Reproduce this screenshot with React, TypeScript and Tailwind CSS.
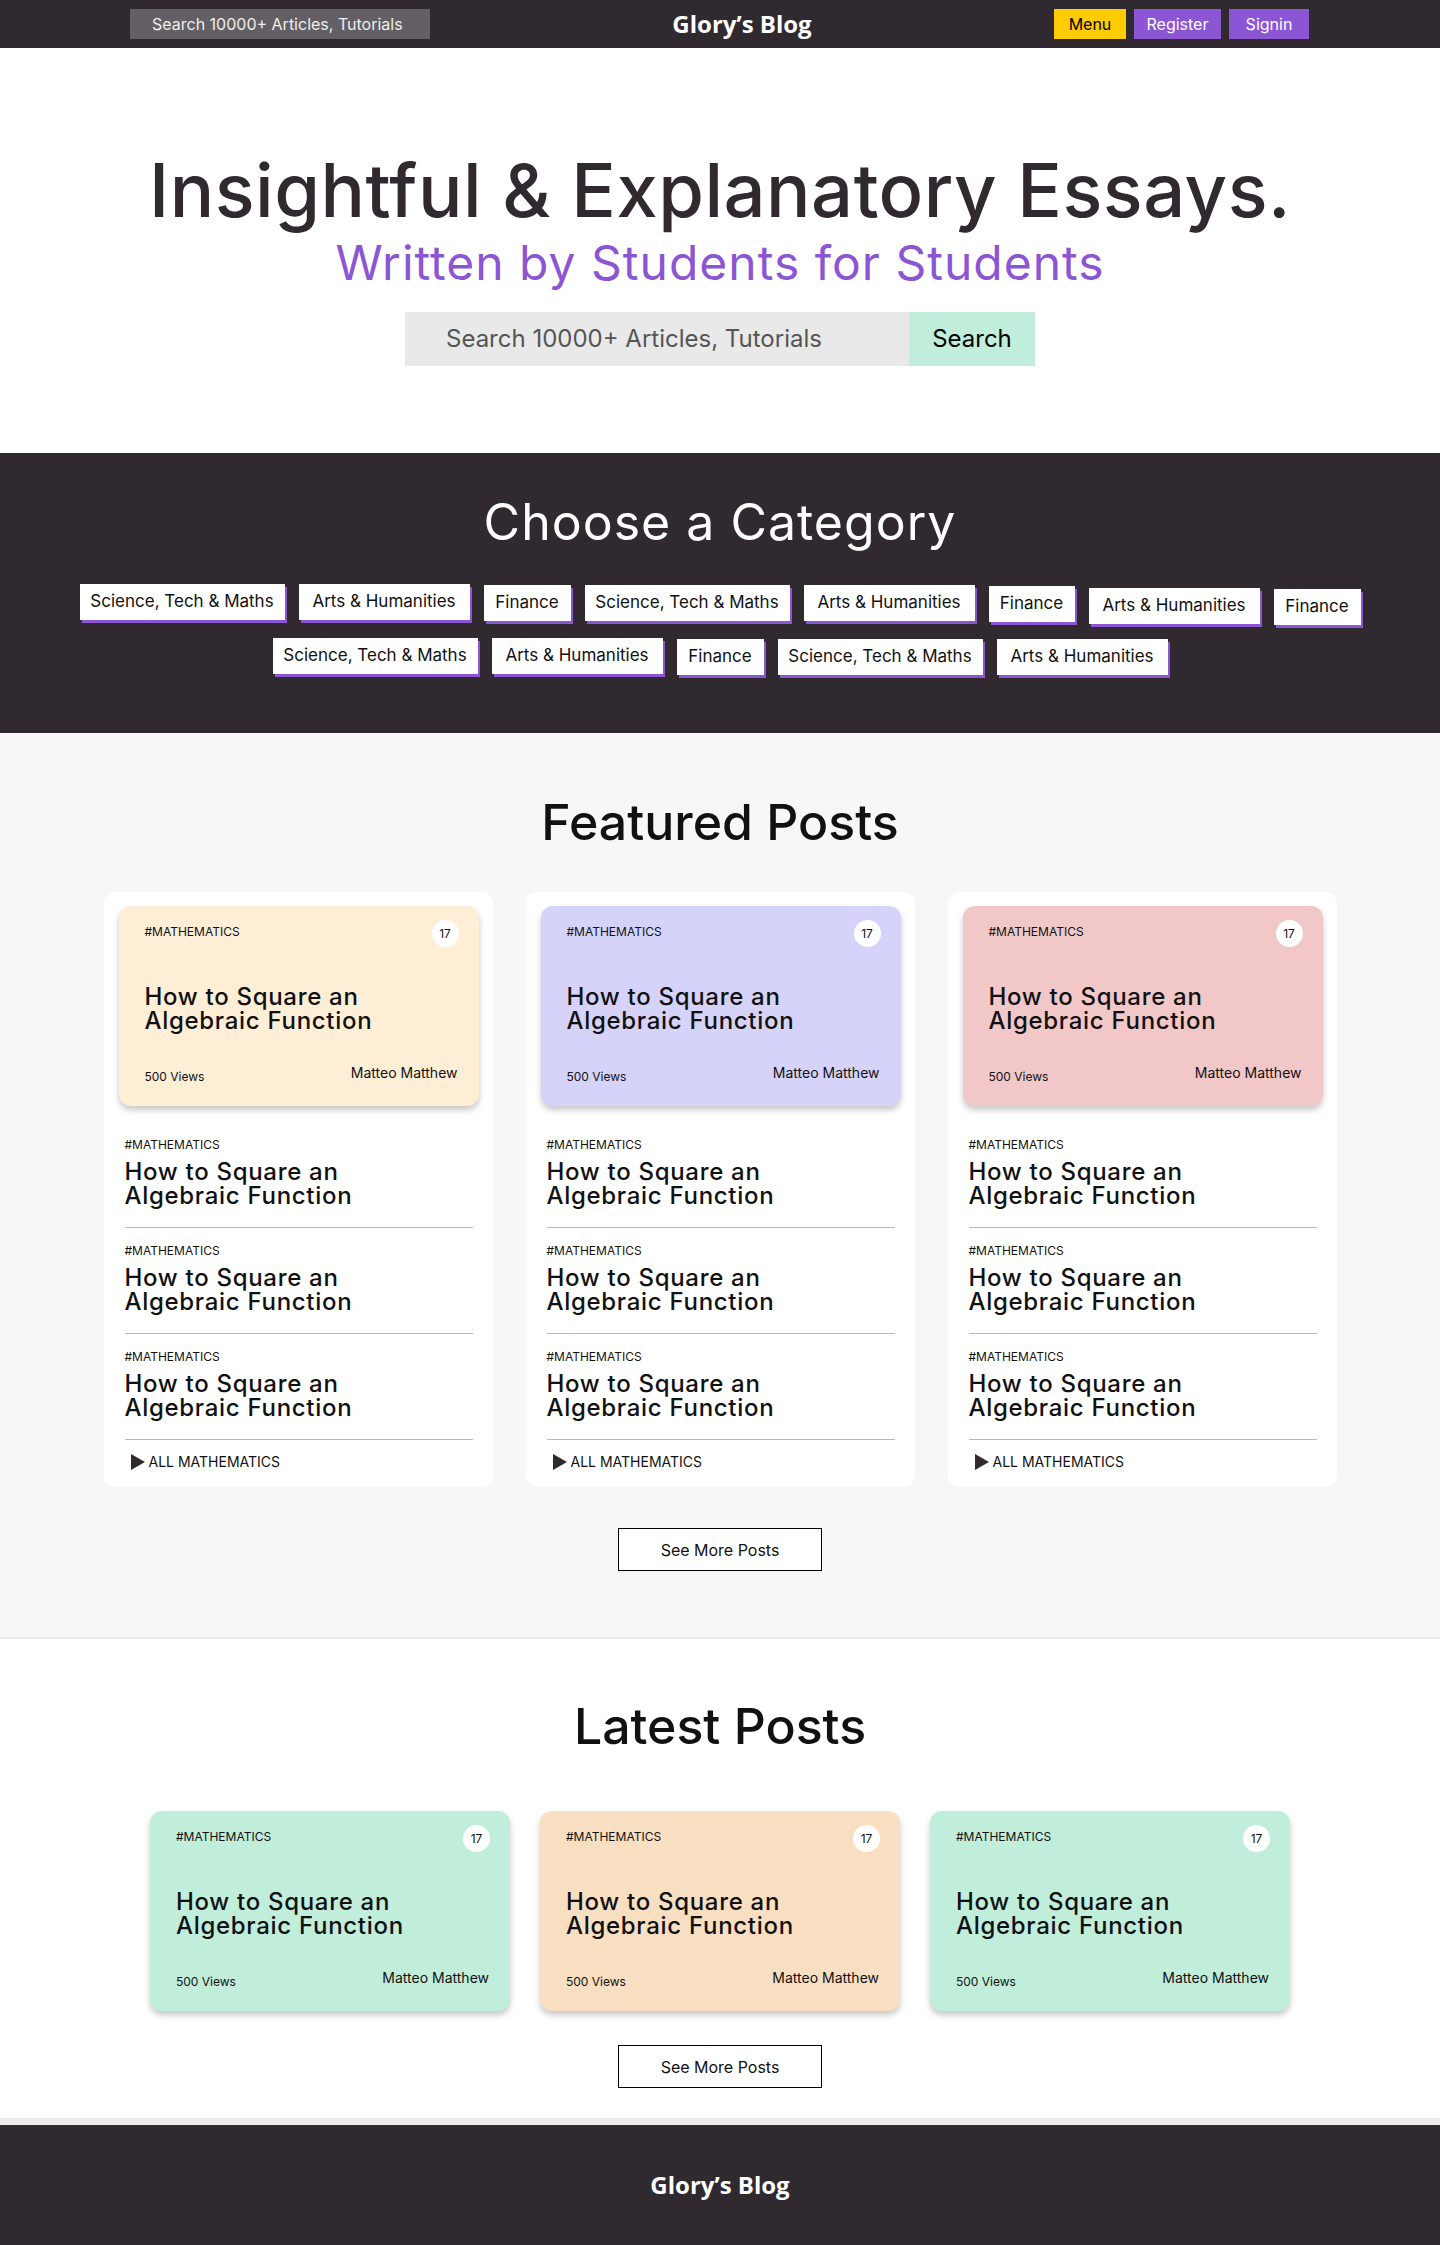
import React from "react";

const tagsRow1: [string, string][] = [
  ["Science, Tech & Maths", "w-[205px] mt-0"],
  ["Arts & Humanities", "w-[171px] mt-0"],
  ["Finance", "w-[87px] mt-px"],
  ["Science, Tech & Maths", "w-[205px] mt-px"],
  ["Arts & Humanities", "w-[171px] mt-px"],
  ["Finance", "w-[86px] mt-[2px]"],
  ["Arts & Humanities", "w-[171px] mt-[4px]"],
  ["Finance", "w-[87px] mt-[5px]"],
];
const tagsRow2: [string, string][] = [
  ["Science, Tech & Maths", "w-[205px] mt-0"],
  ["Arts & Humanities", "w-[171px] mt-0"],
  ["Finance", "w-[87px] mt-px"],
  ["Science, Tech & Maths", "w-[205px] mt-px"],
  ["Arts & Humanities", "w-[171px] mt-px"],
];

function Tag({ label, cls }: { label: string; cls: string }) {
  return (
    <div
      className={`${cls} h-[36px] bg-white text-[#111] text-[17px] flex items-center justify-center shadow-[2px_3px_0_#8b55d4]`}
    >
      {label}
    </div>
  );
}

function PostCard({ bg }: { bg: string }) {
  return (
    <div
      className={`${bg} h-[200px] rounded-[12px] shadow-[0_4px_6px_rgba(0,0,0,0.22)] flex flex-col pt-[14px] px-[26px] pb-[21px] text-[#111]`}
    >
      <div className="flex items-center justify-between h-[27px]">
        <span className="text-[12px] leading-[16px] -mt-[4px]">#MATHEMATICS</span>
        <span className="w-[27px] h-[27px] -mr-[6px] rounded-full bg-white flex items-center justify-center text-[12px]">
          17
        </span>
      </div>
      <div className="mt-[38px] text-[24px] leading-[24px] font-medium tracking-[0.7px]">
        <div>How to Square an</div>
        <div>Algebraic Function</div>
      </div>
      <div className="flex-1" />
      <div className="flex items-end justify-between">
        <span className="text-[12px] leading-[16px]">500 Views</span>
        <span className="text-[14px] leading-[20px] mb-[2px] -mr-[5px]">Matteo Matthew</span>
      </div>
    </div>
  );
}

function ListItem() {
  return (
    <div className="border-b border-[#b9b9b9] pt-[15px] pb-[19px] text-[#111]">
      <div className="text-[12px] leading-[16px]">#MATHEMATICS</div>
      <div className="mt-[7px] text-[24px] leading-[24px] font-medium tracking-[0.7px]">
        <div>How to Square an</div>
        <div>Algebraic Function</div>
      </div>
    </div>
  );
}

function Column({ bg }: { bg: string }) {
  return (
    <div className="bg-white rounded-[12px] pt-[14px] pl-[15px] pr-[14px] pb-[17px]">
      <PostCard bg={bg} />
      <div className="mx-[6px] mt-[16px]">
        <ListItem />
        <ListItem />
        <ListItem />
        <div className="pt-[14px] flex items-center gap-[4px] pl-[6px]">
          <svg width="14" height="16" viewBox="0 0 14 16">
            <polygon points="0,0 14,8 0,16" fill="#302a30" />
          </svg>
          <span className="text-[14px] leading-[16px] text-[#111]">ALL MATHEMATICS</span>
        </div>
      </div>
    </div>
  );
}

function SeeMore() {
  return (
    <div className="w-[204px] h-[43px] mx-auto border border-black bg-white flex items-center justify-center text-[16px] text-[#111]">
      See More Posts
    </div>
  );
}

export default function App() {
  return (
    <div className="font-['Inter',sans-serif] w-full min-h-[2245px] bg-white">
      {/* Nav */}
      <nav className="h-[48px] bg-[#302a30] flex items-center justify-between pl-[130px] pr-[131px]">
        <div className="w-[300px] h-[30px] bg-[#645f64] text-[16px] text-[#eeeeee] pl-[22px] flex items-center">
          Search 10000+ Articles, Tutorials
        </div>
        <div className="font-['Open_Sans',sans-serif] text-[24px] font-bold text-white">Glory’s Blog</div>
        <div className="flex gap-[8px]">
          <div className="w-[72px] h-[30px] bg-[#ffcc00] text-black text-[16px] flex items-center justify-center">
            Menu
          </div>
          <div className="w-[87px] h-[30px] bg-[#8b55d4] text-white text-[16px] flex items-center justify-center">
            Register
          </div>
          <div className="w-[80px] h-[30px] bg-[#8b55d4] text-white text-[16px] flex items-center justify-center">
            Signin
          </div>
        </div>
      </nav>

      {/* Hero */}
      <section className="pt-[105px] pb-[87px] flex flex-col items-center">
        <h1 className="text-[74px] leading-[74px] font-medium tracking-[0.5px] text-[#302a30]">
          Insightful &amp; Explanatory Essays.
        </h1>
        <h2 className="mt-[12px] text-[48px] leading-[48px] tracking-[1px] text-[#8b55d4]">
          Written by Students for Students
        </h2>
        <div className="mt-[25px] flex h-[54px]">
          <div className="w-[504px] bg-[#e9e9e9] pl-[41px] flex items-center text-[24px] text-[#555555]">
            Search 10000+ Articles, Tutorials
          </div>
          <div className="w-[126px] bg-[#c0eedb] flex items-center justify-center text-[24px] text-black">
            Search
          </div>
        </div>
      </section>

      {/* Categories */}
      <section className="h-[280px] bg-[#302a30] pt-[44px] flex flex-col items-center">
        <h2 className="text-[50px] leading-[50px] tracking-[1px] text-white">Choose a Category</h2>
        <div className="mt-[37px] flex flex-wrap justify-center items-start gap-x-[14px] gap-y-[13px] w-full">
          {tagsRow1.map(([l, c], i) => (
            <Tag key={"a" + i} label={l} cls={c} />
          ))}
          {tagsRow2.map(([l, c], i) => (
            <Tag key={"b" + i} label={l} cls={c} />
          ))}
        </div>
      </section>

      {/* Featured */}
      <section className="bg-[#f7f7f7] pt-[64px] pb-[66px] border-b-[2px] border-[#e9e9e9]">
        <h2 className="text-center text-[50px] leading-[50px] font-medium text-[#111]">Featured Posts</h2>
        <div className="mt-[45px] w-[1233px] mx-auto grid grid-cols-3 gap-[33px]">
          <Column bg="bg-[#feeed6]" />
          <Column bg="bg-[#d6d3fb]" />
          <Column bg="bg-[#f2c7c7]" />
        </div>
        <div className="mt-[41px]">
          <SeeMore />
        </div>
      </section>

      {/* Latest */}
      <section className="bg-white pt-[62px] pb-[30px] border-b-[7px] border-[#ebebeb]">
        <h2 className="text-center text-[50px] leading-[50px] font-medium text-[#111]">Latest Posts</h2>
        <div className="mt-[60px] w-[1140px] mx-auto grid grid-cols-3 gap-[30px]">
          <PostCard bg="bg-[#c0eedb]" />
          <PostCard bg="bg-[#f9dfc1]" />
          <PostCard bg="bg-[#c0eedb]" />
        </div>
        <div className="mt-[34px]">
          <SeeMore />
        </div>
      </section>

      {/* Footer */}
      <footer className="h-[120px] bg-[#302a30] flex items-center justify-center">
        <span className="font-['Open_Sans',sans-serif] text-[24px] font-bold text-white">Glory’s Blog</span>
      </footer>
    </div>
  );
}
